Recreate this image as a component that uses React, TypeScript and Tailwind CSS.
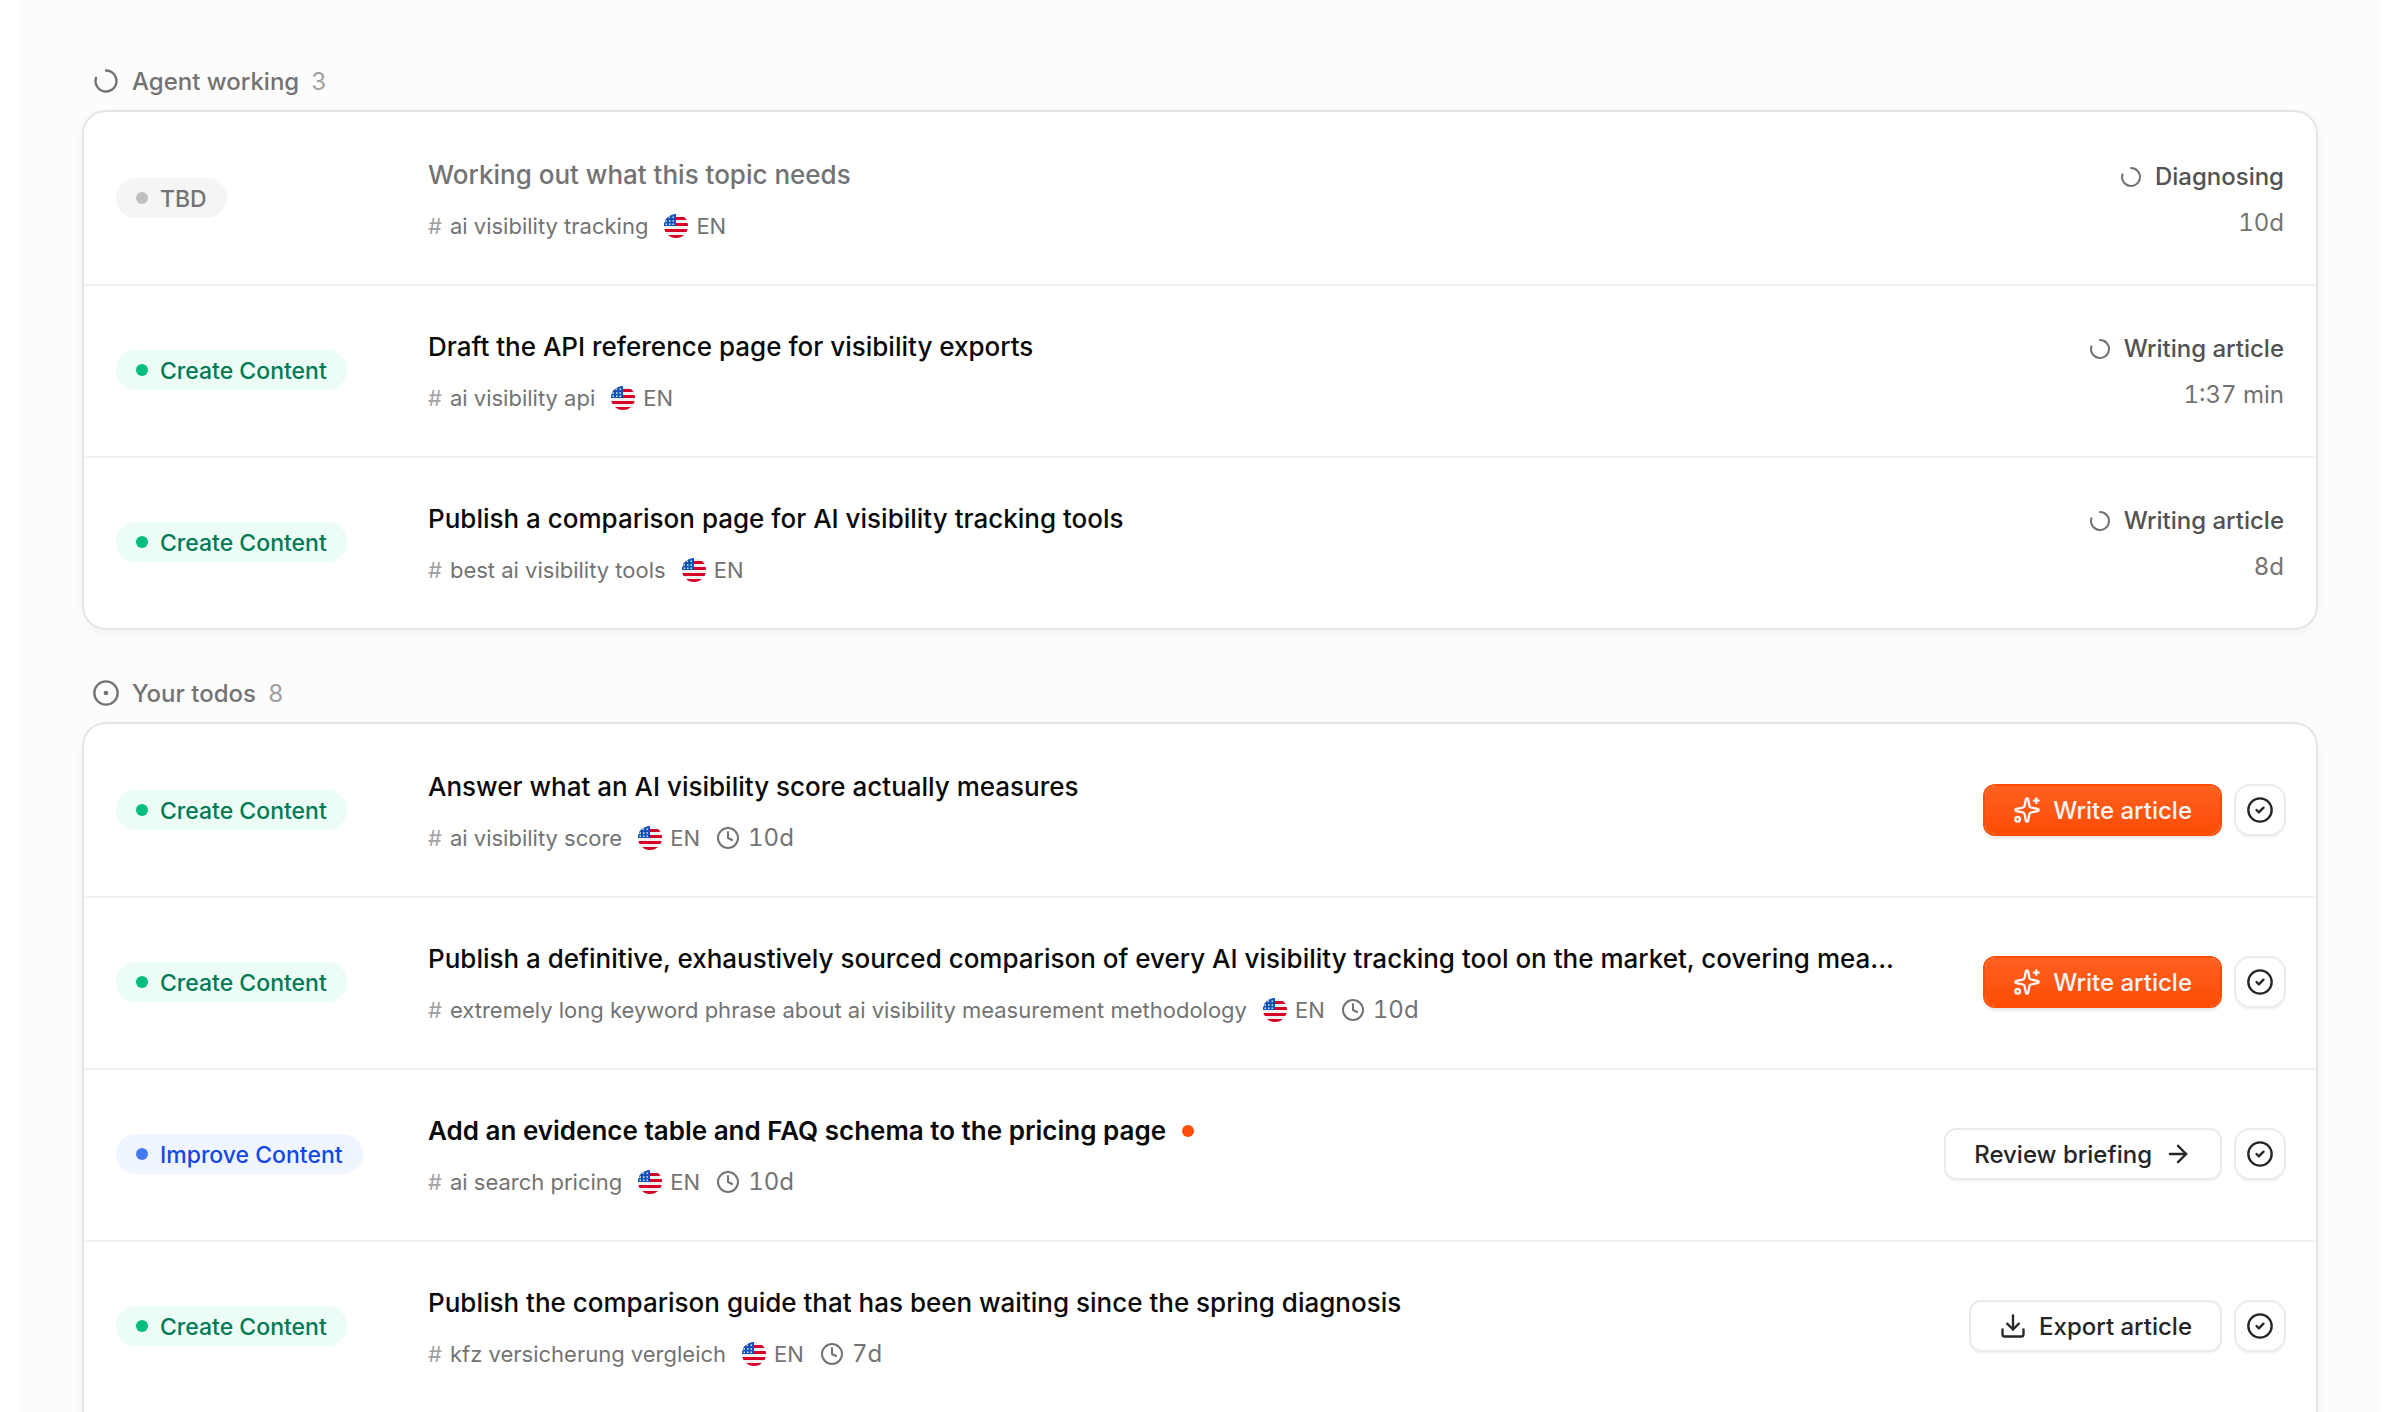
import type { ReactNode } from 'react'
import {
  ArrowRight,
  CircleCheck,
  CircleDot,
  Clock,
  Download,
  LoaderCircle,
  Sparkles,
} from 'lucide-react'

type Kind = 'tbd' | 'create' | 'improve'

type Topic = {
  kind: Kind
  title: string
  keyword: string
  age: string
  status?: string
  action?: 'write' | 'review' | 'export'
  unread?: boolean
}

const working: Topic[] = [
  { kind: 'tbd', title: 'Working out what this topic needs', keyword: 'ai visibility tracking', status: 'Diagnosing', age: '10d' },
  { kind: 'create', title: 'Draft the API reference page for visibility exports', keyword: 'ai visibility api', status: 'Writing article', age: '1:37 min' },
  { kind: 'create', title: 'Publish a comparison page for AI visibility tracking tools', keyword: 'best ai visibility tools', status: 'Writing article', age: '8d' },
]

const todos: Topic[] = [
  { kind: 'create', title: 'Answer what an AI visibility score actually measures', keyword: 'ai visibility score', age: '10d', action: 'write' },
  {
    kind: 'create',
    title: 'Publish a definitive, exhaustively sourced comparison of every AI visibility tracking tool on the market, covering mea...',
    keyword: 'extremely long keyword phrase about ai visibility measurement methodology',
    age: '10d',
    action: 'write',
  },
  { kind: 'improve', title: 'Add an evidence table and FAQ schema to the pricing page', keyword: 'ai search pricing', age: '10d', action: 'review', unread: true },
  { kind: 'create', title: 'Publish the comparison guide that has been waiting since the spring diagnosis', keyword: 'kfz versicherung vergleich', age: '7d', action: 'export' },
]

const badges = {
  tbd: { label: 'TBD', box: 'bg-neutral-100 text-neutral-500', dot: 'bg-[#bfbfbf]' },
  create: { label: 'Create Content', box: 'bg-emerald-50 text-emerald-700', dot: 'bg-emerald-500' },
  improve: { label: 'Improve Content', box: 'bg-blue-50 text-blue-700', dot: 'bg-[#4678ef]' },
}

function Badge({ kind }: { kind: Kind }) {
  const { label, box, dot } = badges[kind]
  return (
    <span className={`flex h-10 w-fit items-center gap-3 rounded-full px-5 text-[23px] leading-9 font-medium ${box}`}>
      <span className={`size-3 rounded-full ${dot}`} />
      <span className="pt-0.5">{label}</span>
    </span>
  )
}

function UsFlag() {
  return (
    <svg viewBox="0 0 24 24" className="size-6 shrink-0" aria-hidden="true">
      <clipPath id="flag-round">
        <circle cx="12" cy="12" r="12" />
      </clipPath>
      <g clipPath="url(#flag-round)">
        <rect width="24" height="24" fill="#f0f0f0" />
        <path d="M0 3h24v3H0zM0 9h24v3H0zM0 15h24v3H0zM0 21h24v3H0z" fill="#d80027" />
        <rect width="12" height="12" fill="#0f52b5" />
        <path
          d="M4.5 2.5H6V4H4.5zM8.5 2.5H10V4H8.5zM1.5 6.2H3v1.500H1.500zM5 6.200h1.500v1.500H5zM8.500 6.200H10v1.500H8.500zM1.500 9.500H3V11H1.500zM5 9.500h1.500V11H5zM8.500 9.500H10V11H8.500z"
          fill="#dbe6f7"
        />
      </g>
    </svg>
  )
}

const whiteButton =
  'bg-white text-neutral-800 ring-2 ring-[#ebebeb] shadow-[0_3px_3px_rgba(0,0,0,0.08)]'

function ActionButton({ action }: { action: NonNullable<Topic['action']> }) {
  const base = 'flex h-12 items-center gap-3 rounded-[10px] px-7 text-2xl leading-9 font-medium whitespace-nowrap'
  if (action === 'write') {
    return (
      <button
        type="button"
        className={`${base} bg-linear-to-b from-[#ff6020] to-[#fc4c02] text-neutral-100 ring-2 ring-[#fb4d07] shadow-[0_4px_4px_rgba(0,0,0,0.12)]`}
      >
        <Sparkles className="size-7" />
        <span className="pt-0.5">Write article</span>
      </button>
    )
  }
  return (
    <button type="button" className={`${base} ${whiteButton}`}>
      {action === 'export' && <Download className="size-7" />}
      <span className="pt-0.5">{action === 'export' ? 'Export article' : 'Review briefing'}</span>
      {action === 'review' && <ArrowRight className="size-7" />}
    </button>
  )
}

function TopicRow({ topic }: { topic: Topic }) {
  return (
    <li className="flex items-center px-8 py-10 shadow-[inset_0_2px_0_#f1f1f1] first:shadow-none">
      <div className="w-[312px] shrink-0">
        <Badge kind={topic.kind} />
      </div>
      <div className="min-w-0 flex-1">
        <h3
          className={`flex items-center gap-4 text-[26px] leading-[46px] ${topic.unread ? 'font-semibold' : 'font-medium'} ${
            topic.kind === 'tbd' ? 'text-neutral-500' : 'text-neutral-950'
          }`}
        >
          <span className="truncate">{topic.title}</span>
          {topic.unread && <span className="size-3 shrink-0 rounded-full bg-[#ff4d0a]" />}
        </h3>
        <div className="mt-2.5 flex items-center gap-4 text-[22px] leading-9 text-neutral-500">
          <span className="flex gap-2">
            <span className="text-neutral-400">#</span>
            {topic.keyword}
          </span>
          <span className="flex items-center gap-2">
            <UsFlag />
            EN
          </span>
          {topic.action && (
            <span className="flex items-center gap-2 text-2xl leading-9 tabular-nums">
              <Clock className="size-6" />
              {topic.age}
            </span>
          )}
        </div>
      </div>
      {topic.action ? (
        <div className="ml-14 flex shrink-0 gap-4">
          <ActionButton action={topic.action} />
          <button
            type="button"
            aria-label="Mark as done"
            className={`flex size-12 items-center justify-center rounded-[14px] ${whiteButton}`}
          >
            <CircleCheck className="size-7" />
          </button>
        </div>
      ) : (
        <div className="ml-14 flex shrink-0 flex-col items-end gap-2.5 pt-1">
          <span className="flex items-center gap-3 text-2xl leading-9 font-medium text-neutral-600">
            <LoaderCircle className="size-6 -rotate-90 text-neutral-500" />
            {topic.status}
          </span>
          <span className="text-2xl leading-9 text-neutral-500 tabular-nums">{topic.age}</span>
        </div>
      )}
    </li>
  )
}

function Section({ icon, title, count, topics }: { icon: ReactNode; title: string; count: number; topics: Topic[] }) {
  // leave room under the last row while there is more to load
  const hasMore = topics.length < count

  return (
    <section>
      <h2 className="mb-2.5 flex items-center gap-3 px-2.5 text-2xl leading-9 font-medium text-neutral-500">
        {icon}
        <span className="pt-0.5">{title}</span>
        <span className="pt-0.5 font-normal text-neutral-400 tabular-nums">{count}</span>
      </h2>
      <ul
        className={`overflow-hidden rounded-3xl border-2 border-neutral-200 bg-white shadow-[0_4px_12px_rgba(0,0,0,0.03)] ${
          hasMore ? 'pb-10' : ''
        }`}
      >
        {topics.map((topic) => (
          <TopicRow key={topic.keyword} topic={topic} />
        ))}
      </ul>
    </section>
  )
}

export default function App() {
  return (
    <div className="h-screen overflow-hidden bg-white px-5 font-['Inter',sans-serif]">
      <main className="flex min-h-full flex-col gap-11 bg-[#fcfcfc] px-[62px] pt-[62px]">
        <Section
          icon={<LoaderCircle className="size-7 -rotate-90" />}
          title="Agent working"
          count={3}
          topics={working}
        />
        <Section icon={<CircleDot className="size-7" />} title="Your todos" count={8} topics={todos} />
      </main>
    </div>
  )
}
